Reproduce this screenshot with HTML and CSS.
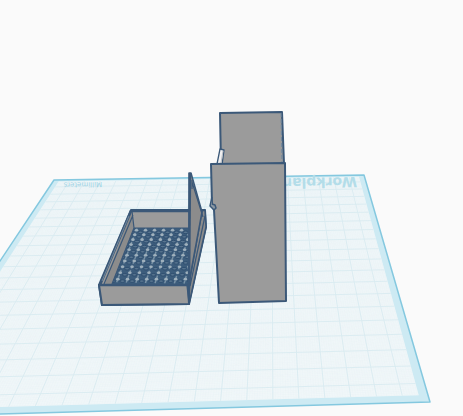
FILE: index.html
```html
<!DOCTYPE html>
<html lang="en">
<head>
<meta charset="utf-8">
<meta name="viewport" content="width=device-width, initial-scale=1">
<title>Workplane</title>
<link rel="stylesheet" href="styles.css">
</head>
<body>
<main class="viewport">
<svg class="scene" viewBox="0 0 463 416" preserveAspectRatio="xMidYMid slice" role="img" aria-label="Workplane with a perforated tray and a tall box">
  <defs>
    <clipPath id="floor-clip"><path d="M134 228H189V284H112Z"/></clipPath>
  </defs>

  <path class="plate-border" d="M54 180L364 175L430 402L-104 417Z"/>
  <path id="plate-inner" class="plate-inner"/>
  <path id="fine" class="grid-fine"/>
  <path id="grid" class="grid"/>
  <path class="plate-edge" d="M54 180L364 175L430 402L-104 417Z"/>
  <text class="label" transform="translate(357 177) rotate(179)">Workplane</text>
  <text class="units" transform="translate(102 182) rotate(179)">Millimeters</text>

  <g class="tray">
    <path class="solid" d="M131 210L205 210L206 227L189 304L102 305L99 285Z"/>
    <path class="inside-left" d="M131 211L134 228L112 284H105Z"/>
    <path class="floor" d="M134 228H189V284H112Z"/>
    <g id="holes" clip-path="url(#floor-clip)"></g>
    <path class="rim" d="M131 211H189M131 211L100 285"/>
    <path class="rim-light" d="M129 216L102 281"/>
    <path class="line" d="M132 211L134 228H189M133 215L104 284M134 228L112 284"/>
    <path class="side" d="M189 284L202 211L205 210L206 227L189 304Z"/>
    <path class="line" d="M205 216L190 286"/>
    <path class="front" d="M99 285H188L189 304L102 305Z"/>
    <path class="rim" d="M99 285H188"/>
    <path class="side" d="M189 173L191 173L202 212L190 277L189 302Z"/>
    <path class="lid-edge" d="M190 173L189 285"/>
    <path class="line" d="M192 180V189M187 286L189 303M192 182L203 217"/>
  </g>

  <g class="box">
    <path class="solid" d="M220 113L282 112L284 164L221 165Z"/>
    <path class="strip" d="M281 113L282 163"/>
    <path class="pin" d="M220 149L224 150L222 165L217 164Z"/>
    <path class="pin-shade" d="M223 151L221 163"/>
    <path class="solid" d="M211 164L285 163L286 301L219 303L214 210L212 204Z"/>
    <path class="latch" d="M212 197L210 206L214 210L216 208L215 205L212 204"/>
  </g>
</svg>
</main>
<script src="scene.js"></script>
</body>
</html>
```
FILE: styles.css
```css
body {
  margin: 0;
  background: #fafafa;
  font-family: "DejaVu Sans", sans-serif;
}

.viewport {
  height: 100vh;
  overflow: hidden;
}

.scene {
  display: block;
  width: 100%;
  height: 100%;
}

.scene path {
  stroke-linejoin: round;
}

.plate-border { fill: #cdeaf3; }
.plate-inner { fill: #f1f7f9; }

.plate-edge {
  fill: none;
  stroke: #84c8df;
  stroke-width: 1.5;
}

.grid {
  fill: none;
  stroke: #d9ebf0;
  stroke-width: 0.9;
}

.grid-fine {
  fill: none;
  stroke: #e6f1f5;
  stroke-width: 0.3;
}

.label {
  fill: #b3dde9;
  font-size: 14px;
  font-weight: bold;
}

.units {
  fill: #9fd3e5;
  font-size: 7px;
}

.solid,
.front,
.side {
  fill: #9b9b9b;
  stroke: #3b5878;
  stroke-width: 2;
}

.side {
  fill: #8c8c8c;
  stroke-width: 1.5;
}

.inside-left { fill: #8c8c8c; }
.floor { fill: #3d5d7c; }

.hole-gap {
  stroke: #7891a5;
  stroke-width: 1.5;
}

.hole-joint { fill: #a0b1bd; }

.hole-ring {
  fill: #58758f;
  stroke: #304f70;
  stroke-width: 1;
}

.rim,
.line,
.lid-edge {
  fill: none;
  stroke: #3b5878;
}

.rim { stroke-width: 2.5; }
.line { stroke-width: 1.2; }
.lid-edge { stroke-width: 2.5; }

.rim-light {
  stroke: #7f93a5;
  stroke-width: 0.8;
}

.strip {
  stroke: #6f88a0;
  stroke-width: 1;
  stroke-dasharray: 4 2;
}

.pin {
  fill: #f1f1f2;
  stroke: #3b5878;
  stroke-width: 1.3;
}

.pin-shade {
  stroke: #b8bcc1;
  stroke-width: 1;
}

.latch {
  fill: #8c98a3;
  stroke: #3b5878;
  stroke-width: 1.5;
}
```
FILE: scene.js
```js
// Perspective projection of the unit square onto the workplane's corners.
const corners = [[54, 180], [364, 175], [430, 402], [-104, 417]];
const [[x0, y0], [x1, y1], [x2, y2], [x3, y3]] = corners;
const sx = x0 - x1 + x2 - x3, sy = y0 - y1 + y2 - y3;
const dx1 = x1 - x2, dx2 = x3 - x2, dy1 = y1 - y2, dy2 = y3 - y2;
const det = dx1 * dy2 - dx2 * dy1;
const g = (sx * dy2 - dx2 * sy) / det;
const h = (dx1 * sy - sx * dy1) / det;

function project(u, v) {
  const w = g * u + h * v + 1;
  const x = ((x1 - x0 + g * x1) * u + (x3 - x0 + h * x3) * v + x0) / w;
  const y = ((y1 - y0 + g * y1) * u + (y3 - y0 + h * y3) * v + y0) / w;
  return x.toFixed(2) + " " + y.toFixed(2);
}

function gridPath(count) {
  let d = "";
  for (let i = 1; i < count; i++) {
    const t = i / count;
    if (t < 0.018 || t > 0.982) continue;
    d += `M${project(t, 0.012)}L${project(t, 0.982)}`;
    d += `M${project(0.018, t)}L${project(0.982, t)}`;
  }
  return d;
}

document.getElementById("grid").setAttribute("d", gridPath(20));
document.getElementById("fine").setAttribute("d", gridPath(200));
document.getElementById("plate-inner").setAttribute("d",
  `M${project(0.018, 0.012)}L${project(0.982, 0.012)}L${project(0.982, 0.982)}L${project(0.018, 0.982)}Z`);

// Perforated floor: light joints between dark-rimmed holes.
let holes = "";
for (let i = 0; i < 9; i++) {
  const top = 137 + 9 * i, bottom = 116 + 9.7 * i;
  holes += `<path class="hole-gap" stroke-dasharray="3 2" d="M${top} 228L${bottom} 284"/>`;
  for (let j = 0; j < 10; j++) {
    const t = (j + 0.3) / 10 * (0.8 + 0.02 * j);
    const x = top + (bottom - top) * t, y = 229 + 55 * t;
    holes += `<ellipse class="hole-joint" cx="${x}" cy="${y}" rx="1.8" ry="1.3"/>`;
    holes += `<ellipse class="hole-ring" cx="${x - 5}" cy="${y + 2}" rx="2.5" ry="1.3"/>`;
  }
}
document.getElementById("holes").innerHTML = holes;
```
